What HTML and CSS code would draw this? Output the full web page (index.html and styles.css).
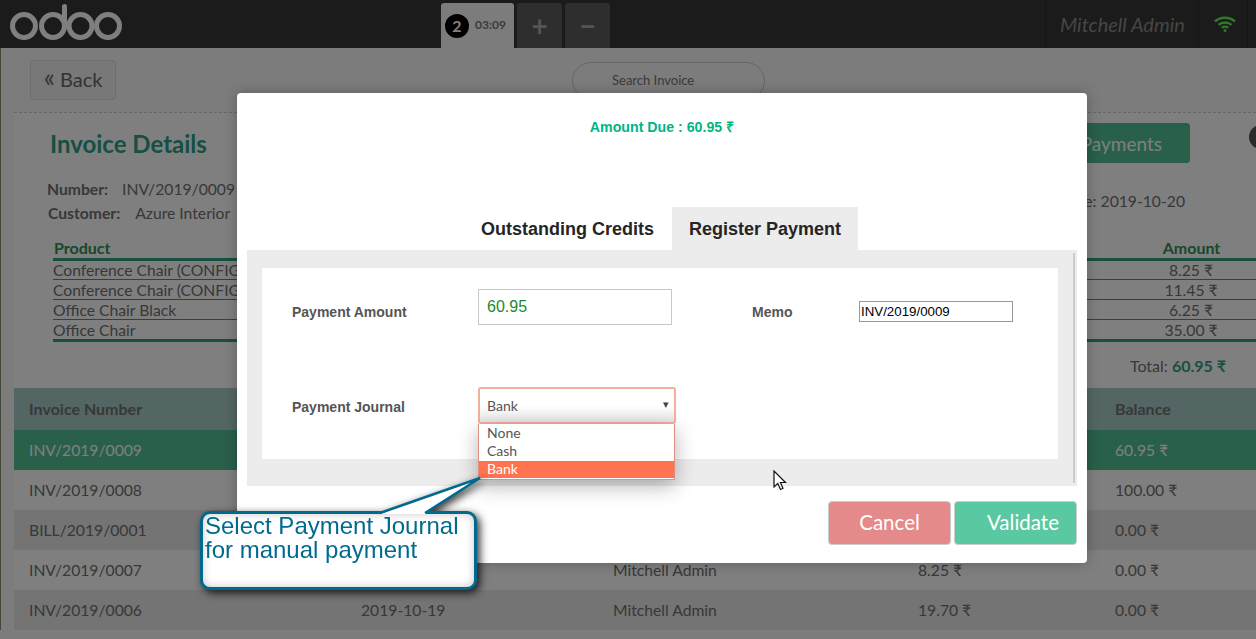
FILE: index.html
```html
<!DOCTYPE html>
<html lang="en">
<head>
    <meta charset="UTF-8">
    <meta name="viewport" content="width=device-width, initial-scale=1.0">
    <title>Invoice Details</title>
    <link rel="stylesheet" href="styles.css">
</head>
<body>
    <header class="topbar">
        <svg class="logo" width="114" height="40" viewBox="0 0 114 40">
            <g fill="none" stroke="#fff" stroke-width="5">
                <circle cx="15" cy="24" r="11.5"/>
                <circle cx="44" cy="24" r="11.5"/>
                <circle cx="71.500" cy="24" r="11.500"/>
                <circle cx="99" cy="24" r="11.5"/>
                <path d="M55.500 24V4.500" stroke-linecap="round"/>
            </g>
        </svg>
        <div class="order-tabs">
            <div class="order-tab">
                <span class="order-num">2</span>
                <span class="order-time">03:09</span>
            </div>
            <div class="order-btn">+</div>
            <div class="order-btn">&minus;</div>
        </div>
        <div class="user-name">Mitchell Admin</div>
        <div class="wifi">
            <svg width="22" height="16" viewBox="0 0 22 16">
                <g fill="none" stroke="#66f055" stroke-width="2.400">
                    <path d="M1 5.500C6.500 0.500 15.500 0.500 21 5.500"/>
                    <path d="M4.500 8.800C8 5.800 14 5.800 17.500 8.800"/>
                    <path d="M7.800 11.800C9.700 10.400 12.300 10.400 14.200 11.800"/>
                </g>
                <circle cx="11" cy="14.500" r="1.500" fill="#66f055"/>
            </svg>
        </div>
    </header>

    <main class="screen">
        <div class="toolbar">
            <button class="back-btn"><span class="back-arrow">&laquo;</span> Back</button>
            <div class="search-box">Search Invoice</div>
        </div>

        <section class="details">
            <div class="details-head">
                <h2 class="details-title">Invoice Details</h2>
                <button class="payments-btn">Payments</button>
            </div>
            <span class="dark-dot"></span>
            <div class="info">
                <div>
                    <div class="info-row"><b class="info-label">Number:</b>INV/2019/0009</div>
                    <div class="info-row info-customer"><b class="info-label">Customer:</b>Azure Interior</div>
                </div>
                <div class="info-date">Date: 2019-10-20</div>
            </div>
            <table class="lines">
                <thead>
                    <tr><th>Product</th><th class="amount">Amount</th></tr>
                </thead>
                <tbody>
                    <tr><td>Conference Chair (CONFIG: Steel)</td><td class="amount">8.25 ₹</td></tr>
                    <tr><td>Conference Chair (CONFIG: Aluminium)</td><td class="amount">11.45 ₹</td></tr>
                    <tr><td>Office Chair Black</td><td class="amount">6.25 ₹</td></tr>
                    <tr><td>Office Chair</td><td class="amount">35.00 ₹</td></tr>
                </tbody>
            </table>
            <div class="total">Total: <b>60.95 ₹</b></div>
        </section>

        <table class="invoices">
            <thead>
                <tr>
                    <th>Invoice Number</th>
                    <th>Date</th>
                    <th>Salesperson</th>
                    <th>Amount</th>
                    <th>Balance</th>
                </tr>
            </thead>
            <tbody>
                <tr class="selected"><td>INV/2019/0009</td><td>2019-10-20</td><td>Mitchell Admin</td><td>60.95 ₹</td><td>60.95 ₹</td></tr>
                <tr><td>INV/2019/0008</td><td>2019-10-20</td><td>Mitchell Admin</td><td>100.00 ₹</td><td>100.00 ₹</td></tr>
                <tr><td>BILL/2019/0001</td><td>2019-10-20</td><td>Mitchell Admin</td><td>13.50 ₹</td><td>0.00 ₹</td></tr>
                <tr><td>INV/2019/0007</td><td>2019-10-19</td><td>Mitchell Admin</td><td>8.25 ₹</td><td>0.00 ₹</td></tr>
                <tr><td>INV/2019/0006</td><td>2019-10-19</td><td>Mitchell Admin</td><td>19.70 ₹</td><td>0.00 ₹</td></tr>
            </tbody>
        </table>
    </main>

    <div class="backdrop"></div>

    <div class="modal">
        <p class="amount-due">Amount Due : 60.95 ₹</p>
        <div class="tabs">
            <div class="tab">Outstanding Credits</div>
            <div class="tab tab-active">Register Payment</div>
        </div>
        <div class="tab-panel">
            <span class="scroll-line"></span>
            <form class="pay-form">
                <label class="pay-label label-amount">Payment Amount</label>
                <input class="pay-amount" type="text" value="60.95">
                <label class="pay-label label-memo">Memo</label>
                <input class="pay-memo" type="text" value="INV/2019/0009">
                <label class="pay-label label-journal">Payment Journal</label>
                <div class="journal">
                    <div class="journal-value">Bank<span class="journal-arrow">▾</span></div>
                    <ul class="journal-list">
                        <li>None</li>
                        <li>Cash</li>
                        <li class="journal-on">Bank</li>
                    </ul>
                </div>
            </form>
        </div>
        <div class="modal-actions">
            <button class="action cancel">Cancel</button>
            <button class="action validate">Validate</button>
        </div>
    </div>

    <svg class="pointer" width="14" height="21" viewBox="0 0 14 21">
        <path d="M1 1V17L4.800 13.500L7.500 19.500L10 18.300L7.400 12.500H12.500Z" fill="#fff" stroke="#111" stroke-width="1.200"/>
    </svg>

    <div class="callout">
        <svg class="callout-tail" width="110" height="42" viewBox="0 0 110 42">
            <path d="M5 40L105 4L50 40Z" fill="#fff"/>
            <path d="M5 39L105 4L50 39" fill="none" stroke="#006a8e" stroke-width="2.400"/>
        </svg>
        <div class="callout-box">Select Payment Journal<br>for manual payment</div>
    </div>
</body>
</html>
```

FILE: styles.css
```css
* {
    box-sizing: border-box;
}
body {
    margin: 0;
    width: 1256px;
    height: 639px;
    overflow: hidden;
    font-family: Lato, "Noto Sans", sans-serif;
    font-size: 16px;
    color: #707070;
    background-color: #f8f8f8;
    position: relative;
}

/* top bar */
.topbar {
    height: 48px;
    background-color: #363636;
    display: flex;
    align-items: flex-end;
}
.logo {
    margin: 0 1px 6px 9px;
    flex: none;
}
.order-tabs {
    display: flex;
    gap: 3px;
    margin-left: 317px;
    height: 45px;
}
.order-tab {
    width: 73px;
    background-color: #f8f8f8;
    border-radius: 3px 3px 0 0;
    display: flex;
    align-items: center;
    padding-left: 4px;
}
.order-num {
    width: 24px;
    height: 24px;
    border-radius: 50%;
    background-color: #000;
    color: #fff;
    font-weight: bold;
    font-size: 16px;
    line-height: 24px;
    text-align: center;
    flex: none;
}
.order-time {
    font-size: 12px;
    font-weight: bold;
    color: #777;
    margin-left: 6px;
    padding-bottom: 3px;
}
.order-btn {
    width: 45px;
    background-color: #5c5c5c;
    border-radius: 3px 3px 0 0;
    color: #aaa;
    font-size: 28px;
    font-weight: bold;
    text-align: center;
    line-height: 44px;
}
.user-name {
    margin-left: 435px;
    width: 154px;
    height: 48px;
    border-left: 1px solid #2a2a2a;
    border-right: 1px solid #2a2a2a;
    padding-left: 14px;
    font-style: italic;
    font-size: 20px;
    line-height: 48px;
    color: #8c8c8c;
}
.wifi {
    width: 49px;
    height: 48px;
    border-right: 1px solid #2a2a2a;
    padding: 16px 0 0 15px;
}

/* page behind the popup */
.screen {
    border-left: 1px solid #888c70;
}
.toolbar {
    height: 64px;
    padding: 12px 0 0 29px;
    display: flex;
}
.back-btn {
    width: 86px;
    height: 40px;
    background-color: #f0f0f0;
    border: 1px solid #ddd;
    border-radius: 3px;
    font-family: inherit;
    font-size: 20px;
    color: #666;
    padding: 0 0 2px;
}
.back-arrow {
    font-size: 26px;
    line-height: 20px;
}
.search-box {
    width: 193px;
    height: 38px;
    margin: 2px 0 0 456px;
    border: 1px solid #ccc;
    border-radius: 19px;
    font-size: 13px;
    line-height: 34px;
    padding-left: 39px;
    color: #777;
}
.details {
    height: 276px;
    margin-left: 13px;
    padding-top: 10px;
    background-color: #fff;
    border-top: 1px dashed #ccc;
    position: relative;
}
.details-head {
    display: flex;
    justify-content: space-between;
    padding: 0 66px 0 36px;
    height: 40px;
}
.details-title {
    margin: 0;
    font-size: 24px;
    line-height: 42px;
    color: #2f9f88;
}
.payments-btn {
    width: 240px;
    height: 40px;
    background-color: #52c094;
    border: 1px solid #5cb894;
    border-radius: 3px;
    font-family: inherit;
    font-size: 19px;
    color: #fff;
    text-align: right;
    padding: 0 27px 0 0;
}
.dark-dot {
    position: absolute;
    left: 1235px;
    top: 12px;
    width: 24px;
    height: 24px;
    border-radius: 50%;
    background-color: #555;
}
.info {
    display: flex;
    justify-content: space-between;
    align-items: center;
    font-size: 15.700px;
    line-height: 24px;
    padding: 14px 71px 0 33px;
}
.info-customer {
    padding-left: 1px;
}
.info-label {
    margin-right: 14px;
}
.info-customer .info-label {
    margin-right: 15px;
}
.lines {
    width: calc(100% - 39px);
    margin: 10px 0 0 39px;
    border-collapse: collapse;
    table-layout: fixed;
    font-size: 15.700px;
}
.lines th {
    text-align: left;
    color: #2f9055;
    height: 24px;
    padding: 3px 0 0 1px;
    border-bottom: 3px solid #2f9f80;
    line-height: 20px;
    font-size: 16px;
}
.lines td {
    height: 20px;
    padding: 0;
    line-height: 18px;
    border-bottom: 1px solid #2f9f80;
    white-space: nowrap;
    overflow: hidden;
}
.lines tr:last-child td {
    border-bottom: 3px solid #2f9f80;
    padding-top: 1px;
}
.lines .amount {
    width: 130px;
    text-align: center;
}
.total {
    text-align: right;
    padding-right: 30px;
    margin-top: 14px;
    line-height: 20px;
}
.total b {
    color: #2f9f88;
}
.invoices {
    width: 1242px;
    margin-left: 13px;
    border-collapse: collapse;
    table-layout: fixed;
    font-size: 15.700px;
}
.invoices th, .invoices td {
    text-align: left;
    padding: 0 0 1px 15px;
    white-space: nowrap;
}
.invoices th {
    height: 42px;
    padding-bottom: 2px;
    font-size: 16px;
    background-color: #a8ccc8;
}
.invoices td {
    height: 40px;
}
.invoices tbody tr:nth-child(odd) {
    background-color: #e8e8e8;
}
.invoices tbody tr:nth-child(even) {
    background-color: #fff;
}
.invoices tbody tr.selected {
    background-color: #52c094;
    color: #fff;
}
.invoices th:nth-child(1) { width: 332px; }
.invoices th:nth-child(2) { width: 252px; }
.invoices th:nth-child(3) { width: 305px; }
.invoices th:nth-child(4) { width: 197px; }

/* popup */
.backdrop {
    position: absolute;
    inset: 0;
    background-color: rgba(0, 0, 0, 0.5);
}
.modal {
    position: absolute;
    left: 237px;
    top: 93px;
    width: 850px;
    height: 470px;
    background-color: #fff;
    border-radius: 4px;
    box-shadow: 0 0 14px rgba(0, 0, 0, 0.25);
    font-family: "Liberation Sans", Arial, sans-serif;
}
.amount-due {
    margin: 0;
    padding-top: 26px;
    height: 114px;
    text-align: center;
    font-size: 14.200px;
    line-height: 16px;
    font-weight: bold;
    color: #00b585;
}
.tabs {
    display: flex;
    height: 43px;
    padding-left: 227px;
}
.tab {
    width: 208px;
    padding-left: 17px;
    font-size: 18px;
    font-weight: bold;
    line-height: 44px;
    white-space: nowrap;
    color: #252525;
}
.tab-active {
    width: 186px;
    background-color: #ececec;
}
.tab-panel {
    position: relative;
    height: 236px;
    margin: 0 10px;
    padding: 18px 19px 27px 15px;
    background-color: #ececec;
}
.scroll-line {
    position: absolute;
    right: 2px;
    top: 3px;
    bottom: 3px;
    width: 2px;
    background-color: #ccc;
}
.pay-form {
    height: 191px;
    background-color: #fff;
    padding: 21px 0 0 30px;
    display: grid;
    grid-template-columns: 186px 274px 107px 154px;
    grid-template-rows: 36px 37px;
    row-gap: 62px;
    align-items: start;
}
.pay-label {
    font-size: 14px;
    font-weight: bold;
    line-height: 18px;
    color: #555;
}
.label-amount, .label-memo {
    margin-top: 14px;
}
.label-journal {
    margin-top: 11px;
}
.pay-amount {
    width: 194px;
    height: 36px;
    border: 1px solid #c8c8c8;
    padding: 0 8px;
    font-family: inherit;
    font-size: 16px;
    color: #1b8a2f;
    outline: none;
}
.pay-memo {
    width: 154px;
    height: 21px;
    margin-top: 12px;
    border: 1px solid #999;
    padding: 0 1px;
    font-family: inherit;
    font-size: 13.300px;
    color: #000;
    outline: none;
}
.journal {
    position: relative;
    width: 198px;
    height: 37px;
    font-family: Lato, sans-serif;
    font-size: 14px;
    color: #555;
}
.journal-value {
    height: 37px;
    border: 2px solid #f3aea0;
    border-radius: 3px;
    background: linear-gradient(#fff 50%, #e6e6e6);
    padding: 0 5px 0 7px;
    line-height: 33px;
    display: flex;
    justify-content: space-between;
}
.journal-arrow {
    font-size: 11px;
    line-height: 29px;
    color: #444;
}
.journal-list {
    position: absolute;
    left: 0;
    top: 37px;
    width: 197px;
    margin: 0;
    padding: 0 0 1px;
    list-style: none;
    background-color: #fff;
    border: 1px solid #e09080;
    border-top: 0;
    box-shadow: 0 6px 20px rgba(0, 0, 0, 0.3);
}
.journal-list li {
    height: 18px;
    line-height: 18px;
    padding-left: 8px;
}
.journal-list .journal-on {
    height: 17px;
    margin-top: 1px;
    line-height: 16px;
    background-color: #ff7350;
    color: #fff;
}
.modal-actions {
    display: flex;
    justify-content: flex-end;
    gap: 3px;
    padding: 15px 10px 0 0;
}
.action {
    width: 123px;
    height: 44px;
    border: 1px solid #ccc;
    border-radius: 4px;
    font-family: Lato, sans-serif;
    font-size: 20.500px;
    color: #fff;
    padding: 0 0 2px;
}
.cancel {
    background-color: #e58a8a;
}
.validate {
    background-color: #5ac8a0;
    padding-left: 15px;
}
.pointer {
    position: absolute;
    left: 773px;
    top: 470px;
}

/* tutorial note */
.callout {
    position: absolute;
    left: 200px;
    top: 511px;
    width: 277px;
    height: 79px;
    filter: drop-shadow(3px 3px 4px rgba(0, 0, 0, 0.8));
}
.callout-box {
    height: 79px;
    border: 3px solid #006a8e;
    border-radius: 10px;
    background-color: #fff;
    box-shadow: inset 0 0 9px rgba(0, 0, 0, 0.22);
    padding: 0 0 0 2px;
    font-family: "Liberation Sans", Arial, sans-serif;
    font-size: 24px;
    line-height: 24px;
    color: #006b8f;
}
.callout-tail {
    position: absolute;
    left: 175px;
    top: -37px;
    z-index: 1;
}
```
